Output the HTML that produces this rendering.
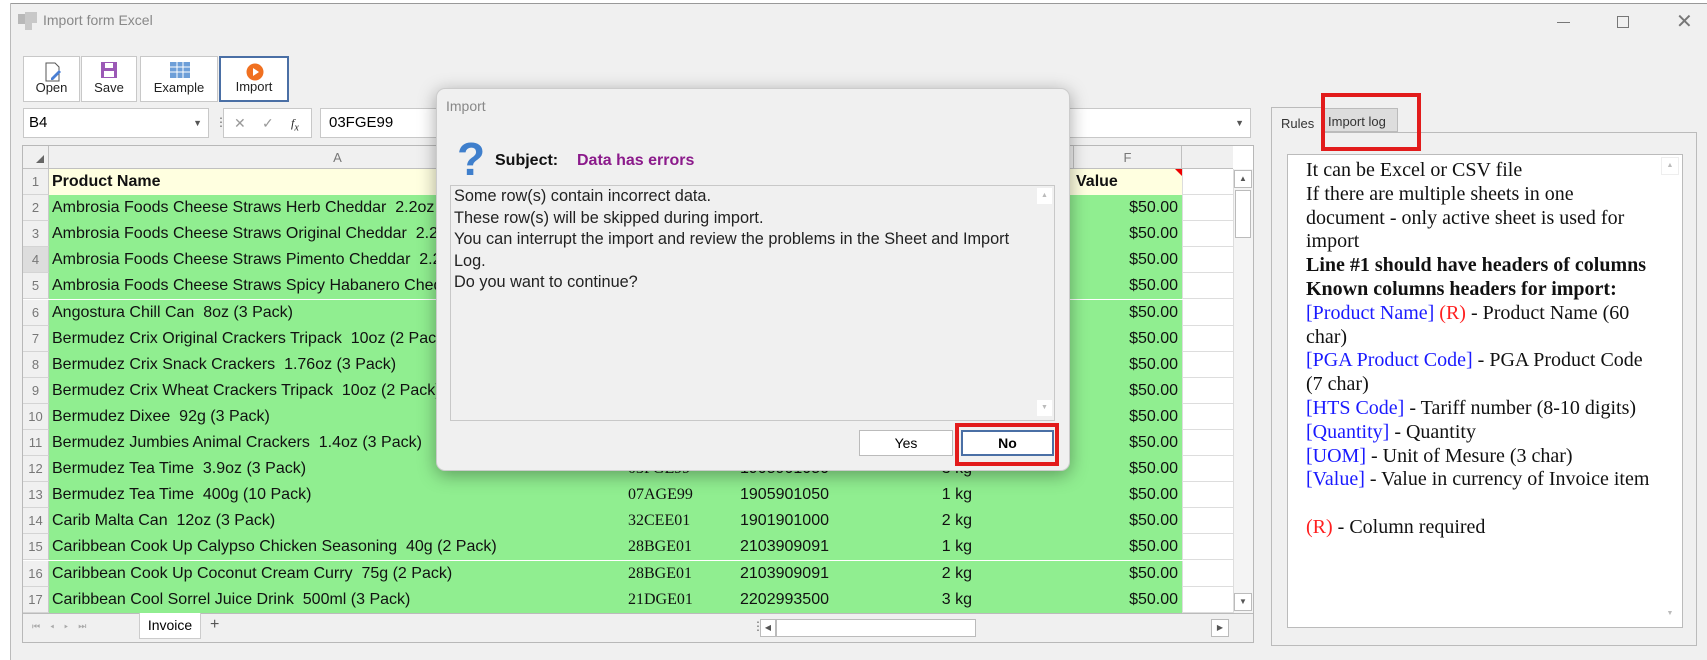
<!DOCTYPE html>
<html><head><meta charset="utf-8"><style>
*{box-sizing:border-box;margin:0;padding:0}
body{width:1707px;height:660px;overflow:hidden;background:#f0f0f0;font-family:"Liberation Sans",sans-serif;position:relative}
.a{position:absolute}
.btn{position:absolute;top:56px;height:46px;background:#fff;border:1px solid #c8c8c8;font-size:13px;text-align:center;color:#222}
.btn span{position:absolute;left:0;right:0;bottom:6px}
.cell{position:absolute;font-size:16px;color:#111;white-space:pre;line-height:26px}
.rn{position:absolute;left:23px;width:26px;text-align:center;font-size:13px;color:#777;line-height:26px;background:#f0f0f0;border-bottom:1px solid #d4d4d4;border-right:1px solid #c8c8c8}
.ser{font-family:"Liberation Serif",serif;font-size:16px}
.rules{font-family:"Liberation Serif",serif;font-size:20px;line-height:23.8px;color:#111;white-space:nowrap}
.bl{color:#1a1aff}.rd{color:#ff2020}
</style></head><body>
<div class="a" style="left:0;top:0;width:11px;height:660px;background:#fff;border-right:1px solid #bbb"></div>
<div class="a" style="left:0;top:0;width:1707px;height:3px;background:#fff"></div>
<div class="a" style="left:11px;top:3px;width:1696px;height:1px;background:#999"></div>
<div class="a" style="left:18px;top:14px;width:10px;height:10px;background:#b8b8b8"></div>
<div class="a" style="left:25px;top:12px;width:12px;height:11px;background:#c8c8c8"></div>
<div class="a" style="left:25px;top:23px;width:7px;height:7px;background:#c8c8c8"></div>
<div class="a" style="left:43px;top:12px;font-size:14px;color:#888">Import form Excel</div>
<div class="a" style="left:1557px;top:22px;width:13px;height:1px;background:#777"></div>
<div class="a" style="left:1617px;top:16px;width:12px;height:12px;border:1px solid #777"></div>
<div class="a" style="left:1676px;top:12px;font-size:20px;color:#777;line-height:20px">✕</div>
<div class="btn" style="left:23px;width:57px"><svg class="a" style="left:19px;top:5px" width="20" height="20"><path d="M3 1h9l4 4v14H3z" fill="#fff" stroke="#555"/><path d="M8 16l8-8 2 2-8 8H8z" fill="#4a7fd4"/></svg><span>Open</span></div>
<div class="btn" style="left:81px;width:56px"><svg class="a" style="left:18px;top:4px" width="20" height="18"><rect x="1" y="1" width="16" height="16" fill="#9b59b6"/><rect x="5" y="2" width="8" height="5" fill="#fff"/><rect x="4" y="10" width="10" height="6" fill="#fff"/></svg><span>Save</span></div>
<div class="btn" style="left:140px;width:78px"><svg class="a" style="left:29px;top:5px" width="22" height="16"><rect x="0" y="0" width="20" height="16" fill="#6e9fd8"/><path d="M0 5h20M0 10h20M7 0v16M13 0v16" stroke="#fff"/></svg><span>Example</span></div>
<div class="btn" style="left:219px;width:70px;border:2px solid #4a6fa5"><svg class="a" style="left:24px;top:4px" width="20" height="20"><circle cx="10" cy="10" r="8.5" fill="#f07020"/><path d="M8 6l6 4-6 4z" fill="#fff"/></svg><span>Import</span></div>
<div class="a" style="left:23px;top:108px;width:186px;height:30px;background:#fff;border:1px solid #c8c8c8;font-size:15px;line-height:28px;padding-left:5px">B4<span style="position:absolute;right:6px;top:0;font-size:9px;color:#555">▼</span></div>
<div class="a" style="left:215px;top:115px;font-size:12px;color:#666">⋮</div>
<div class="a" style="left:223px;top:108px;width:89px;height:30px;background:#fff;border:1px solid #c8c8c8;color:#999;font-size:14px;line-height:28px"><span class="a" style="left:10px">✕</span><span class="a" style="left:38px">✓</span><span class="a" style="left:67px;color:#222;font-style:italic;font-size:12px;font-family:'Liberation Serif',serif">f<sub>x</sub></span></div>
<div class="a" style="left:320px;top:108px;width:931px;height:30px;background:#fff;border:1px solid #c8c8c8;font-size:15px;line-height:28px;padding-left:8px">03FGE99<span style="position:absolute;right:6px;top:0;font-size:9px;color:#555">▼</span></div>
<div class="a" style="left:22px;top:145px;width:1232px;height:498px;background:#fff;border:1px solid #b8b8b8"></div>
<div class="a" style="left:23px;top:146px;width:1210px;height:23px;background:#f0f0f0;border-bottom:1px solid #c0c0c0"></div>
<div class="a" style="left:23px;top:146px;width:26px;height:23px;border-right:1px solid #c0c0c0"></div>
<svg class="a" style="left:35px;top:154px" width="10" height="10"><path d="M9 1v8H1z" fill="#666"/></svg>
<div class="a" style="left:48px;top:146px;width:580px;text-align:center;font-size:13px;color:#777;line-height:23px;border-right:1px solid #c0c0c0;height:23px">A</div>
<div class="a" style="left:1073px;top:146px;width:109px;text-align:center;font-size:13px;color:#777;line-height:23px;border-left:1px solid #c0c0c0;border-right:1px solid #c0c0c0;height:23px">F</div>
<div id="rows"></div>
<div class="a" style="left:1233px;top:169px;width:20px;height:444px;background:#f4f4f4;border-left:1px solid #ddd"></div>
<div class="a" style="left:1234px;top:170px;width:18px;height:18px;background:#fff;border:1px solid #bbb;font-size:8px;text-align:center;line-height:16px;color:#555">▲</div>
<div class="a" style="left:1235px;top:190px;width:16px;height:48px;background:#fff;border:1px solid #bbb"></div>
<div class="a" style="left:1234px;top:593px;width:18px;height:18px;background:#fff;border:1px solid #bbb;font-size:8px;text-align:center;line-height:16px;color:#555">▼</div>
<div class="a" style="left:23px;top:613px;width:1230px;height:29px;background:#f0f0f0;border-top:1px solid #bbb"></div>
<div class="a" style="left:32px;top:621px;font-size:9px;color:#aaa;letter-spacing:10px">⏮◂▸⏭</div>
<div class="a" style="left:139px;top:613px;width:62px;height:26px;background:#fff;border:1px solid #ccc;border-top:none;font-size:14px;text-align:center;line-height:24px">Invoice</div>
<div class="a" style="left:210px;top:616px;font-size:16px;color:#555">+</div>
<div class="a" style="left:752px;top:619px;font-size:12px;color:#666">⋮</div>
<div class="a" style="left:760px;top:619px;width:16px;height:18px;background:#fff;border:1px solid #bbb;font-size:8px;line-height:16px;text-align:center;color:#555">◀</div>
<div class="a" style="left:776px;top:619px;width:200px;height:18px;background:#fff;border:1px solid #bbb"></div>
<div class="a" style="left:1211px;top:619px;width:18px;height:18px;background:#fff;border:1px solid #bbb;font-size:8px;line-height:16px;text-align:center;color:#555">▶</div>
<div class="a" style="left:1271px;top:132px;width:426px;height:514px;border:1px solid #bbb"></div>
<div class="a" style="left:1271px;top:107px;width:52px;height:27px;background:#f0f0f0;border:1px solid #bbb;border-bottom:none;font-size:13px;color:#333;padding:8px 0 0 9px">Rules</div>
<div class="a" style="left:1324px;top:108px;width:74px;height:24px;background:#ddd;border:1px solid #bbb;font-size:13px;color:#333;padding:5px 0 0 3px">Import log</div>
<div class="a" style="left:1321px;top:93px;width:100px;height:58px;border:4px solid #e21b1b"></div>
<div class="a" style="left:1287px;top:154px;width:396px;height:474px;background:#fff;border:1px solid #bbb"></div>
<div class="a" style="left:1661px;top:157px;width:18px;height:18px;border:1px solid #eee;font-size:7px;color:#bbb;text-align:center;line-height:16px">▲</div>
<div class="a" style="left:1661px;top:606px;width:18px;height:18px;font-size:7px;color:#bbb;text-align:center;line-height:16px">▼</div>
<div class="a rules" style="left:1306px;top:159px">
It can be Excel or CSV file<br>If there are multiple sheets in one<br>document - only active sheet is used for<br>import<br><b>Line #1 should have headers of columns<br>Known columns headers for import:</b><br>
<span class="bl">[Product Name]</span> <span class="rd">(R)</span> - Product Name (60<br>char)<br>
<span class="bl">[PGA Product Code]</span> - PGA Product Code<br>(7 char)<br>
<span class="bl">[HTS Code]</span> - Tariff number (8-10 digits)<br>
<span class="bl">[Quantity]</span> - Quantity<br>
<span class="bl">[UOM]</span> - Unit of Mesure (3 char)<br>
<span class="bl">[Value]</span> - Value in currency of Invoice item<br><br>
<span class="rd">(R)</span> - Column required</div>
<div class="a" style="left:436px;top:88px;width:634px;height:383px;background:#f0f0f0;border:1px solid #ccc;border-radius:9px;box-shadow:0 4px 18px rgba(0,0,0,.35)"></div>
<div class="a" style="left:446px;top:98px;font-size:14px;color:#888">Import</div>
<div class="a" style="left:457px;top:136px;font-size:46px;font-weight:bold;color:#3f7fcc;line-height:46px">?</div>
<div class="a" style="left:495px;top:152px;font-size:16px;font-weight:bold;color:#111">Subject:</div>
<div class="a" style="left:577px;top:152px;font-size:16px;font-weight:bold;color:#8b1a8b">Data has errors</div>
<div class="a" style="left:450px;top:185px;width:605px;height:236px;border:1px solid #c8c8c8;background:#f0f0f0"></div>
<div class="a" style="left:1037px;top:188px;width:15px;height:16px;background:#fff;font-size:7px;color:#bbb;text-align:center;line-height:16px">▲</div>
<div class="a" style="left:1037px;top:400px;width:15px;height:16px;background:#fff;font-size:7px;color:#bbb;text-align:center;line-height:16px">▼</div>
<div class="a" style="left:454px;top:186px;font-size:16.3px;line-height:21.5px;color:#222">Some row(s) contain incorrect data.<br>These row(s) will be skipped during import.<br>You can interrupt the import and review the problems in the Sheet and Import<br>Log.<br>Do you want to continue?</div>
<div class="a" style="left:859px;top:430px;width:94px;height:26px;background:#fff;border:1px solid #bbb;font-size:14px;text-align:center;line-height:24px">Yes</div>
<div class="a" style="left:961px;top:430px;width:93px;height:26px;background:#fff;border:2px solid #4a6fa5;font-size:14px;font-weight:bold;text-align:center;line-height:22px">No</div>
<div class="a" style="left:955px;top:423px;width:104px;height:43px;border:4px solid #e21b1b"></div>
<script>
var d=[
["Ambrosia Foods Cheese Straws Herb Cheddar  2.2oz (3 Pack)","03FGE99","1905901050","3 kg"],
["Ambrosia Foods Cheese Straws Original Cheddar  2.2oz (3 Pack)","03FGE99","1905901050","3 kg"],
["Ambrosia Foods Cheese Straws Pimento Cheddar  2.2oz (3 Pack)","03FGE99","1905901050","3 kg"],
["Ambrosia Foods Cheese Straws Spicy Habanero Cheddar  2.2oz","03FGE99","1905901050","3 kg"],
["Angostura Chill Can  8oz (3 Pack)","29AGE99","2202993500","3 kg"],
["Bermudez Crix Original Crackers Tripack  10oz (2 Pack)","03FGE99","1905901050","2 kg"],
["Bermudez Crix Snack Crackers  1.76oz (3 Pack)","03FGE99","1905901050","1 kg"],
["Bermudez Crix Wheat Crackers Tripack  10oz (2 Pack)","03FGE99","1905901050","2 kg"],
["Bermudez Dixee  92g (3 Pack)","03FGE99","1905901050","1 kg"],
["Bermudez Jumbies Animal Crackers  1.4oz (3 Pack)","03FGE99","1905901050","1 kg"],
["Bermudez Tea Time  3.9oz (3 Pack)","03FGE99","1905901050","3 kg"],
["Bermudez Tea Time  400g (10 Pack)","07AGE99","1905901050","1 kg"],
["Carib Malta Can  12oz (3 Pack)","32CEE01","1901901000","2 kg"],
["Caribbean Cook Up Calypso Chicken Seasoning  40g (2 Pack)","28BGE01","2103909091","1 kg"],
["Caribbean Cook Up Coconut Cream Curry  75g (2 Pack)","28BGE01","2103909091","2 kg"],
["Caribbean Cool Sorrel Juice Drink  500ml (3 Pack)","21DGE01","2202993500","3 kg"]];
var h='',R=26.1;
for(var i=0;i<17;i++){var t=169+i*R;
h+='<div class="rn" style="top:'+t+'px;height:'+R+'px'+(i==3?';background:#ddd':'')+'">'+(i+1)+'</div>';
h+='<div class="a" style="left:49px;top:'+t+'px;width:1133px;height:'+R+'px;background:'+(i==0?'#ffffe0':'#90ee90')+'"></div>';
h+='<div class="a" style="left:1182px;top:'+t+'px;width:51px;height:'+R+'px;border-bottom:1px solid #ddd;border-left:1px solid #ddd"></div>';
if(i==0){h+='<div class="cell" style="left:52px;top:'+t+'px;font-weight:bold">Product Name</div><div class="cell" style="left:1076px;top:'+t+'px;font-weight:bold">Value</div><div class="a" style="left:1175px;top:'+t+'px;width:0;height:0;border-left:7px solid transparent;border-top:7px solid #e00"></div>';}
else{var r=d[i-1];
h+='<div class="cell" style="left:52px;top:'+t+'px;max-width:570px;overflow:hidden">'+r[0]+'</div>';
h+='<div class="cell ser" style="left:628px;top:'+t+'px">'+r[1]+'</div>';
h+='<div class="cell" style="left:740px;top:'+t+'px">'+r[2]+'</div>';
h+='<div class="cell" style="left:900px;width:72px;text-align:right;top:'+t+'px">'+r[3]+'</div>';
h+='<div class="cell" style="left:1080px;width:98px;text-align:right;top:'+t+'px">$50.00</div>';}
}
document.getElementById('rows').innerHTML=h;
</script>
</body></html>
